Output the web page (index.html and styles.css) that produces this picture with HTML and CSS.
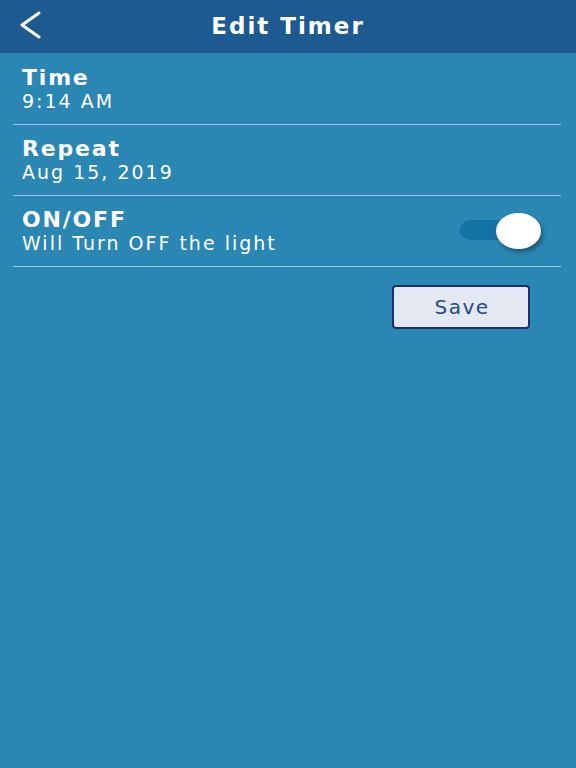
FILE: index.html
```html
<!DOCTYPE html>
<html lang="en">
<head>
    <meta charset="UTF-8">
    <meta name="viewport" content="width=device-width, initial-scale=1.0">
    <title>Edit Timer</title>
    <link rel="stylesheet" href="styles.css">
</head>
<body>
    <div class="header">
        <a class="back" href="#">
            <svg width="24" height="28" viewBox="0 0 24 28">
                <polyline points="21,2 4,14 21,26" fill="none" stroke="white" stroke-width="3" stroke-linecap="round" stroke-linejoin="round"/>
            </svg>
        </a>
        <h1>Edit Timer</h1>
    </div>

    <div class="list">
        <div class="row">
            <div class="text">
                <div class="label">Time</div>
                <div class="value">9:14 AM</div>
            </div>
        </div>
        <div class="row">
            <div class="text">
                <div class="label">Repeat</div>
                <div class="value">Aug 15, 2019</div>
            </div>
        </div>
        <div class="row">
            <div class="text">
                <div class="label">ON/OFF</div>
                <div class="value">Will Turn OFF the light</div>
            </div>
            <div class="switch">
                <div class="track"></div>
                <div class="knob"></div>
            </div>
        </div>
    </div>

    <div class="actions">
        <button class="save">Save</button>
    </div>
</body>
</html>
```

FILE: styles.css
```css
html, body {
    height: 100%;
}
body {
    font-family: "DejaVu Sans", Arial, sans-serif;
    margin: 0;
    padding: 0;
    background-color: #2a86b3;
    color: white;
}
.header {
    background-color: #1c5a8f;
    height: 53px;
    display: flex;
    align-items: center;
    justify-content: center;
    position: relative;
}
.header h1 {
    margin: 0 0 2px 0;
    font-size: 23px;
    font-weight: 700;
    letter-spacing: 2px;
}
.back {
    position: absolute;
    left: 18px;
    top: 11px;
    display: block;
}
.list {
    padding: 1px 15px 0 13px;
}
.row {
    display: flex;
    align-items: center;
    justify-content: space-between;
    height: 70px;
    border-bottom: 1px solid #9cc8df;
    padding-left: 9px;
}
.label {
    font-size: 22px;
    font-weight: 700;
    line-height: 24px;
    letter-spacing: 1.8px;
}
.value {
    font-size: 19px;
    line-height: 22px;
    letter-spacing: 2px;
}
.switch {
    position: relative;
    width: 81px;
    height: 36px;
    margin-right: 20px;
}
.track {
    position: absolute;
    left: 0;
    top: 7px;
    width: 70px;
    height: 20px;
    border-radius: 10px;
    background-color: #1373a5;
}
.knob {
    position: absolute;
    right: 0;
    top: 0;
    width: 45px;
    height: 36px;
    border-radius: 50%;
    background-color: white;
    box-shadow: 2px 3px 4px rgba(0, 0, 0, 0.35);
}
.actions {
    display: flex;
    justify-content: flex-end;
    padding: 18px 46px 0 0;
}
.save {
    width: 138px;
    height: 44px;
    background-color: #e4e8f2;
    border: 2px solid #1f2f6e;
    border-radius: 4px;
    color: #1f4a8a;
    font-family: "DejaVu Sans", Arial, sans-serif;
    font-size: 20px;
    letter-spacing: 1.5px;
    padding: 0 0 0 2px;
}
```
